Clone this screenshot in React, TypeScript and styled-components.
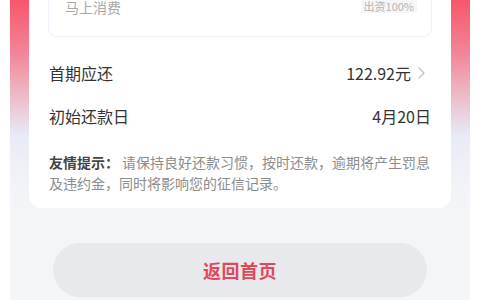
import styled, { createGlobalStyle } from 'styled-components';

const GlobalStyle = createGlobalStyle`
  html, body {
    margin: 0;
    padding: 0;
    background: #ffffff;
  }
  body {
    font-family: "Noto Sans CJK SC", "Noto Sans", sans-serif;
  }
`

const Frame = styled.div`
  padding: 0 10px;
  background: #ffffff;
  height: 300px;
  overflow: hidden;
`

const Screen = styled.div`
  height: 300px;
  overflow: hidden;
  background: linear-gradient(180deg, #f7566b 0px, #f2879a 55px, #eeb6c3 92px, #e7e9f6 135px, #f1f2f7 175px, #f4f5f7 210px);
`

/* page is scrolled a little: card top sits above the viewport */
const Card = styled.div`
  margin: -30px 19px 0;
  background: #ffffff;
  border-radius: 12px;
  padding: 0 20px 14px;
`

const Lender = styled.div`
  margin: 0 -1px;
  border: 1.5px solid #eef0f9;
  border-top: none;
  border-radius: 0 0 9px 9px;
  padding: 30px 14px 23px 16px;
  display: flex;
  align-items: center;
  justify-content: space-between;
`

const LenderName = styled.span`
  font-size: 14px;
  line-height: 12px;
  color: #a8a8a8;
`

const Tag = styled.span`
  font-size: 11px;
  line-height: 13px;
  padding: 0 3px;
  color: #b4b4b4;
  background: #f6f6f8;
  border-radius: 2px;
`

const Details = styled.div`
  margin-top: 14px;
`

const Row = styled.div`
  height: 43px;
  display: flex;
  align-items: center;
  justify-content: space-between;
  font-size: 16px;
  color: #333333;
`

const Value = styled.span<{ $link?: boolean }>`
  display: flex;
  align-items: center;
  gap: 7px;
  padding-right: ${({ $link }) => ($link ? '6px' : '0')};
`

const Tip = styled.p`
  margin: 15px 0 0;
  font-size: 14px;
  line-height: 21px;
  color: #8c8c8c;
`

const TipLabel = styled.b`
  color: #444444;
  font-weight: 700;
  margin-right: 3px;
`

const Button = styled.button`
  display: block;
  margin: 35px auto 0;
  width: 374px;
  height: 54px;
  border: none;
  border-radius: 27px;
  background: #e8e9ec;
  color: #e2485c;
  font-family: inherit;
  font-size: 18px;
  font-weight: 700;
  letter-spacing: 0.5px;
`

function Chevron() {
  return (
    <svg width="7" height="12" viewBox="0 0 7 12" fill="none">
      <path d="M1 1l5 5-5 5" stroke="#c2c2c2" strokeWidth="1.3" strokeLinecap="round" strokeLinejoin="round" />
    </svg>
  )
}

function App() {
  return (
    <Frame>
      <GlobalStyle />
      <Screen>
        <Card>
          <Lender>
            <LenderName>马上消费</LenderName>
            <Tag>出资100%</Tag>
          </Lender>
          <Details>
            <Row>
              <span>首期应还</span>
              <Value $link>122.92元<Chevron /></Value>
            </Row>
            <Row>
              <span>初始还款日</span>
              <Value>4月20日</Value>
            </Row>
          </Details>
          <Tip>
            <TipLabel>友情提示：</TipLabel>请保持良好还款习惯，按时还款，逾期将产生罚息及违约金，同时将影响您的征信记录。
          </Tip>
        </Card>
        <Button>返回首页</Button>
      </Screen>
    </Frame>
  );
}

export default App;
